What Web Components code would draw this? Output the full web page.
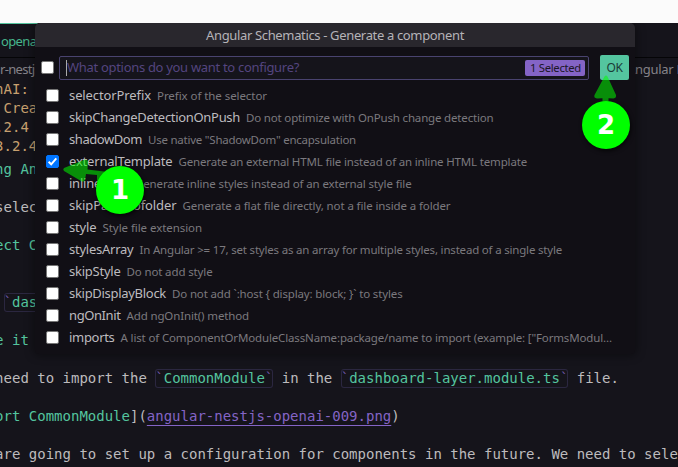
<!DOCTYPE html>
<html lang="en"><head><meta charset="utf-8"><title>Angular Schematics</title>
<style>html,body{margin:0;height:100%;overflow:hidden;background:#15141b}</style></head><body>
<schematics-app></schematics-app>
<script>
const make=(host,html)=>{const t=document.createElement('template');t.innerHTML=html;host.attachShadow({mode:'open'}).append(t.content.cloneNode(true));};

// Text run spread over a given width
customElements.define('fit-text',class extends HTMLElement{
  connectedCallback(){
    if(this.shadowRoot)return;
    make(this,'<style>:host{display:inline-block;white-space:pre;flex:none}</style><span><slot></slot></span>');
    const w=+this.getAttribute('w'),s=this.shadowRoot.querySelector('span');
    const n=this.textContent.length;
    s.style.letterSpacing=((w-s.getBoundingClientRect().width)/n)+'px';
    this.style.width=w+'px';
  }
});

customElements.define('check-box',class extends HTMLElement{
  connectedCallback(){
    if(this.shadowRoot)return;
    const on=this.hasAttribute('checked');
    make(this,`<style>:host{display:block;flex:none;width:13px;height:13px;box-sizing:border-box;border-radius:2px;background:${on?'#0075ff':'#fff'};border:1px solid ${on?'#0075ff':'#767676'}}svg{display:block;width:11px;height:11px}</style>
    ${on?'<svg viewBox="0 0 11 11"><path d="M1.6 5.8 4.2 8.3 9.3 2.4" fill="none" stroke="#fff" stroke-width="1.9"/></svg>':''}`);
  }
});

customElements.define('option-row',class extends HTMLElement{
  connectedCallback(){
    if(this.shadowRoot)return;
    const a=k=>this.getAttribute(k);
    make(this,`<style>:host{display:flex;align-items:center;height:22px;padding-left:11px}
    .t{display:flex;align-items:baseline;margin-left:10px;line-height:22px;height:22px;font-size:13px;color:#bdbbbf}
    .d{font-size:11.5px;color:#7b797e;margin-left:6px}</style>
    <check-box ${this.hasAttribute('checked')?'checked':''}></check-box>
    <div class="t"><fit-text w="${a('lw')}">${a('label')}</fit-text><fit-text class="d" w="${a('dw')}"></fit-text></div>`);
  }
});

customElements.define('quick-pick',class extends HTMLElement{
  connectedCallback(){
    const rows=[['selectorPrefix',82,'Prefix of the selector',110],
    ['skipChangeDetectionOnPush',171,'Do not optimize with OnPush change detection',247.5],
    ['shadowDom',73,'Use native "ShadowDom" encapsulation',208],
    ['externalTemplate',103.5,'Generate an external HTML file instead of an inline HTML template',348.5],
    ['inlineStyle',60,'Generate inline styles instead of an external style file',276.5],
    ['skipParentofolder',107.5,'Generate a flat file directly, not a file inside a folder',268],
    ['style',27.5,'Style file extension',99.5],
    ['stylesArray',64.5,'In Angular >= 17, set styles as an array for multiple styles, instead of a single style',422.5],
    ['skipStyle',51.5,'Do not add style',86],
    ['skipDisplayBlock',97,'Do not add `:host { display: block; }` to styles',230.5],
    ['ngOnInit',51.5,'Add ngOnInit() method',122.5],
    ['imports',45.5,'A list of ComponentOrModuleClassName:package/name to import (example: ["FormsModul…',491.5]];
    make(this,`<style>:host{display:block;width:600px;height:331px;background:#110f15;border-radius:5px 5px 4px 4px;box-shadow:0 0 8px 2px rgba(0,0,0,.36);clip-path:inset(0 -12px -12px -12px round 5px 5px 0 0);font-family:"Noto Sans","Open Sans",sans-serif}
    .title{height:24px;line-height:24px;background:#29272d;border-radius:5px 5px 0 0;color:#b5b3b8;font-size:13px;display:flex;justify-content:center}
    .bar{display:flex;align-items:center;height:25px;padding:8px 6px 4px}
    .input{box-sizing:border-box;width:530px;height:24px;margin-left:5px;border:1px solid #49436f;border-radius:2px;background:#15141b;display:flex;align-items:center;padding:0 3px 0 6px;color:#54457f;font-size:13px}
    .input>fit-text{line-height:18px;padding-bottom:1px}
    .caret{width:1px;height:16px;background:#aaa;flex:none}
    .badge{margin-left:auto;box-sizing:border-box;width:60px;height:16px;line-height:16px;padding-left:5px;background:#8464c6;color:#1c1728;border-radius:2px;font-size:11.3px}
    .ok{width:29px;height:25px;margin-left:11px;border-radius:2px;background:#54c59f;color:#1b3c36;font-size:12px;line-height:25px;text-align:center}</style>
    <div class="title"><fit-text w="258">Angular Schematics - Generate a component</fit-text></div>
    <div class="bar"><check-box></check-box><div class="input"><span class="caret"></span><fit-text w="232">What options do you want to configure?</fit-text><div class="badge"><fit-text w="51">1 Selected</fit-text></div></div><div class="ok"><fit-text w="16">OK</fit-text></div></div>
    <div class="list"></div>`);
    const list=this.shadowRoot.querySelector('.list');
    rows.forEach(([l,lw,d,dw],i)=>{
      const r=document.createElement('option-row');
      r.setAttribute('label',l);r.setAttribute('lw',lw);r.setAttribute('dw',dw);
      if(i===3)r.setAttribute('checked','');
      list.append(r);
      const f=r.shadowRoot.querySelector('.d');
      const n=document.createElement('fit-text');n.className='d';n.setAttribute('w',dw);n.textContent=d;f.replaceWith(n);
    });
  }
});

customElements.define('code-line',class extends HTMLElement{
  connectedCallback(){
    make(this,`<style>:host{display:block;height:19px;line-height:19px;white-space:pre}
    ::slotted(b){font-weight:400;color:#54c59f}::slotted(i){font-style:normal;color:#c7a06f}
    ::slotted(u){color:#8464c6;text-decoration:underline;text-decoration-thickness:1px;text-underline-offset:4px}
    </style><slot></slot>`);
  }
});
customElements.define('code-tag',class extends HTMLElement{
  connectedCallback(){
    make(this,`<style>:host{display:inline-block;height:19px;line-height:19px;box-sizing:border-box;vertical-align:top;color:#54c59f;border-radius:3px;box-shadow:inset 0 0 0 1px #2b2740}
    span{color:#7358ad}</style><span>\`</span><slot></slot><span>\`</span>`);
  }
});

customElements.define('step-marker',class extends HTMLElement{
  connectedCallback(){
    make(this,`<style>:host{display:grid;place-items:center;width:48px;height:48px;border-radius:50%;background:#0f0;color:#fff;font:bold 26px/48px "DejaVu Sans",sans-serif;box-shadow:1px 2px 4px rgba(0,0,0,.7)}</style><slot></slot>`);
  }
});

customElements.define('schematics-app',class extends HTMLElement{
  connectedCallback(){
    make(this,`<style>:host{display:block;position:relative;width:678px;height:467px;overflow:hidden;background:#15141b;font-family:"Noto Sans",sans-serif;font-size:13px}
    .top{height:23px;background:#fbfbfb}
    .tabs{height:35px;box-sizing:border-box;border-bottom:1px solid #050507;color:#46b68c;line-height:34px;white-space:pre}
    .tabs div{width:38px;border-top:1px solid #54c59f;box-sizing:border-box;height:34px;padding-left:1px}
    .crumb{height:22px;line-height:23px;color:#858389;display:flex;justify-content:space-between;white-space:pre}
    .crumb fit-text:last-child{margin-right:-5px}
    .code{font:14px/19px "DejaVu Sans Mono",monospace;margin-left:-4.9px;color:#bdbbbd;width:720px}
    .gap{height:4px}
    quick-pick{position:absolute;left:35px;top:23px}
    .m1,.m2{position:absolute}.m1{left:96px;top:166px}.m2{left:582px;top:101px}
    svg{position:absolute;left:0;top:0}</style>
    <div class="top"></div>
    <div class="tabs"><div><fit-text w="38">openai</fit-text></div></div>
    <div class="crumb"><fit-text w="40">r-nestjs</fit-text><fit-text w="56">Angular F</fit-text></div>
    <div class="code">
    <code-line><i>nAI:</i></code-line><code-line><i> Crea</i></code-line><code-line><i>.2.4</i></code-line><code-line><i>3.2.4</i></code-line>
    <div class="gap"></div>
    <code-line><b>ng An</b></code-line><code-line></code-line><code-line>selec</code-line><code-line></code-line>
    <code-line><b>ect C</b></code-line><code-line></code-line><code-line></code-line><code-line> <code-tag>dash</code-tag></code-line><code-line></code-line>
    <code-line><b>e it</b></code-line><code-line></code-line>
    <code-line>need to import the <code-tag>CommonModule</code-tag> in the <code-tag>dashboard-layer.module.ts</code-tag> file.</code-line><code-line></code-line>
    <code-line><b>ort CommonModule</b>](<u>angular-nestjs-openai-009.png</u>)</code-line><code-line></code-line>
    <code-line>are going to set up a configuration for components in the future. We need to sele</code-line>
    </div>
    <quick-pick></quick-pick>
    <svg width="678" height="467" fill="rgba(0,255,0,.53)"><path d="M64 168 L85 159.5 Q88 159.5 88 162 L87.5 169.5 L112 172.5 L97 183 L97 175 L86 174 L85 180 Q84 182.5 81 181 L64 171 Q62.5 169.5 64 168Z"/>
    <path d="M604.5 76.5 Q606 74.5 607.5 76.5 L616 95 Q616.5 98 613.5 98.5 L608.5 98.2 V102 H602.5 V98.2 L597 98.5 Q593.5 98 594.5 95Z"/></svg>
    <step-marker class="m1">1</step-marker><step-marker class="m2">2</step-marker>`);
  }
});
</script></body></html>
